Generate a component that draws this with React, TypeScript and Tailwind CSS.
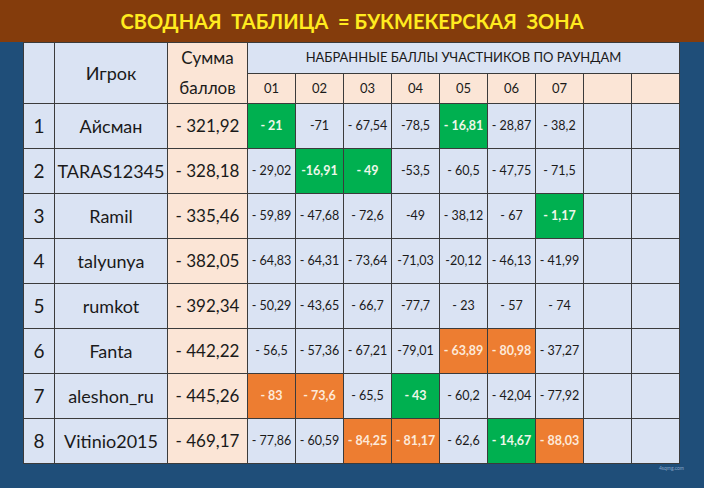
type Mark = "g" | "o" | "";

type Row = {
  place: number;
  name: string;
  total: string;
  rounds: [string, Mark][];
};

const rows: Row[] = [
  {
    place: 1,
    name: "Айсман",
    total: "- 321,92",
    rounds: [["- 21", "g"], ["-71", ""], ["- 67,54", ""], ["-78,5", ""], ["- 16,81", "g"], ["- 28,87", ""], ["- 38,2", ""]],
  },
  {
    place: 2,
    name: "TARAS12345",
    total: "- 328,18",
    rounds: [["- 29,02", ""], ["-16,91", "g"], ["- 49", "g"], ["-53,5", ""], ["- 60,5", ""], ["- 47,75", ""], ["- 71,5", ""]],
  },
  {
    place: 3,
    name: "Ramil",
    total: "- 335,46",
    rounds: [["- 59,89", ""], ["- 47,68", ""], ["- 72,6", ""], ["-49", ""], ["- 38,12", ""], ["- 67", ""], ["- 1,17", "g"]],
  },
  {
    place: 4,
    name: "talyunya",
    total: "- 382,05",
    rounds: [["- 64,83", ""], ["- 64,31", ""], ["- 73,64", ""], ["-71,03", ""], ["-20,12", ""], ["- 46,13", ""], ["- 41,99", ""]],
  },
  {
    place: 5,
    name: "rumkot",
    total: "- 392,34",
    rounds: [["- 50,29", ""], ["- 43,65", ""], ["- 66,7", ""], ["-77,7", ""], ["- 23", ""], ["- 57", ""], ["- 74", ""]],
  },
  {
    place: 6,
    name: "Fanta",
    total: "- 442,22",
    rounds: [["- 56,5", ""], ["- 57,36", ""], ["- 67,21", ""], ["-79,01", ""], ["- 63,89", "o"], ["- 80,98", "o"], ["- 37,27", ""]],
  },
  {
    place: 7,
    name: "aleshon_ru",
    total: "- 445,26",
    rounds: [["- 83", "o"], ["- 73,6", "o"], ["- 65,5", ""], ["- 43", "g"], ["- 60,2", ""], ["- 42,04", ""], ["- 77,92", ""]],
  },
  {
    place: 8,
    name: "Vitinio2015",
    total: "- 469,17",
    rounds: [["- 77,86", ""], ["- 60,59", ""], ["- 84,25", "o"], ["- 81,17", "o"], ["- 62,6", ""], ["- 14,67", "g"], ["- 88,03", "o"]],
  },
];

const roundNums = ["01", "02", "03", "04", "05", "06", "07", "", ""];

const cell = "border border-[#3b3b3b] p-0 text-center";

function RoundCell({ value, mark }: { value: string; mark: Mark }) {
  if (mark === "g") {
    return <td className={`${cell} bg-[#00b050] text-[12.5px] font-bold text-[#eef7ea]`}>{value}</td>;
  }
  if (mark === "o") {
    return <td className={`${cell} bg-[#ed7d31] text-[12.5px] font-bold text-[#fde9d9]`}>{value}</td>;
  }
  return <td className={`${cell} bg-[#dae3f3] text-[12.5px] text-[#1a1a1a]`}>{value}</td>;
}

export default function App() {
  return (
    <div className="relative h-[488px] w-[704px] overflow-hidden bg-[#1f4e79] font-['Lato','Liberation_Sans',sans-serif]">
      <div className="flex h-[42px] items-center justify-center bg-[#843c0c]">
        <h1 className="whitespace-pre text-[20px] font-bold text-[#ffeb1f]">
          СВОДНАЯ  ТАБЛИЦА  = БУКМЕКЕРСКАЯ  ЗОНА
        </h1>
      </div>

      <table className="ml-[23px] w-[656px] table-fixed border-collapse text-[#1a1a1a]">
        <colgroup>
          <col className="w-[31px]" />
          <col className="w-[113px]" />
          <col className="w-[80px]" />
          {roundNums.map((_, i) => (
            <col key={i} className="w-[48px]" />
          ))}
        </colgroup>
        <thead>
          <tr className="h-[30px]">
            <td rowSpan={2} className={`${cell} bg-[#dae3f3]`} />
            <td rowSpan={2} className={`${cell} bg-[#dae3f3] text-[18px]`}>
              Игрок
            </td>
            <td rowSpan={2} className={`${cell} bg-[#fbe5d6] text-[17px] leading-[30px]`}>
              Сумма
              <br />
              баллов
            </td>
            <td colSpan={9} className={`${cell} bg-[#dae3f3] text-[13px]`}>
              НАБРАННЫЕ БАЛЛЫ УЧАСТНИКОВ ПО РАУНДАМ
            </td>
          </tr>
          <tr className="h-[30px]">
            {roundNums.map((n, i) => (
              <td key={i} className={`${cell} bg-[#fbe5d6] text-[13px]`}>
                {n}
              </td>
            ))}
          </tr>
        </thead>
        <tbody>
          {rows.map((r) => (
            <tr key={r.place} className="h-[45px]">
              <td className={`${cell} bg-[#dae3f3] text-[19px]`}>{r.place}</td>
              <td className={`${cell} bg-[#dae3f3] text-[18px]`}>{r.name}</td>
              <td className={`${cell} bg-[#fbe5d6] text-[17px]`}>{r.total}</td>
              {r.rounds.map(([v, m], i) => (
                <RoundCell key={i} value={v} mark={m} />
              ))}
              <td className={`${cell} bg-[#dae3f3]`} />
              <td className={`${cell} bg-[#dae3f3]`} />
            </tr>
          ))}
        </tbody>
      </table>

      <span className="absolute bottom-[16px] right-[20px] text-[5px] text-[#8aa6c8]">4sqmg.com</span>
    </div>
  );
}
